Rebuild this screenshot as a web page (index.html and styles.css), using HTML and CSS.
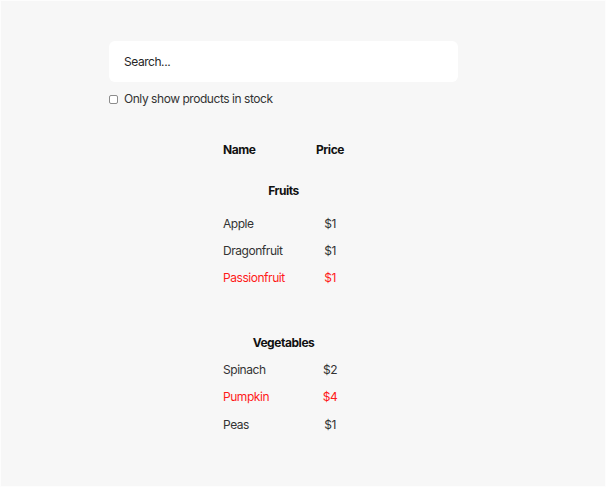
FILE: index.html
```html
<!DOCTYPE html>
<html lang="en">
<head>
<meta charset="utf-8">
<title>Products</title>
<link rel="stylesheet" href="styles.css">
</head>
<body>
<div class="app">
  <form class="search-bar">
    <input class="search" type="text" placeholder="Search...">
    <label class="stock">
      <input class="check" type="checkbox">
      <span>Only show products in stock</span>
    </label>
  </form>
  <table class="products">
    <colgroup><col class="col-name"><col class="col-price"></colgroup>
    <thead>
      <tr><th class="h-name">Name</th><th class="h-price">Price</th></tr>
    </thead>
    <tbody>
      <tr class="category first"><th colspan="2">Fruits</th></tr>
      <tr><td>Apple</td><td class="price">$1</td></tr>
      <tr><td>Dragonfruit</td><td class="price">$1</td></tr>
      <tr class="out"><td>Passionfruit</td><td class="price">$1</td></tr>
      <tr class="category"><th colspan="2">Vegetables</th></tr>
      <tr><td>Spinach</td><td class="price">$2</td></tr>
      <tr class="out"><td>Pumpkin</td><td class="price">$4</td></tr>
      <tr class="last"><td>Peas</td><td class="price">$1</td></tr>
    </tbody>
  </table>
</div>
</body>
</html>
```

FILE: styles.css
```css
html, body {
  margin: 0;
  padding: 0;
}
body {
  background: #f7f7f7;
  font-family: Inter, "Noto Sans", sans-serif;
  font-size: 12px;
  letter-spacing: -0.45px;
  color: #333;
  height: 487px;
  box-sizing: border-box;
  border: 1px solid #fdfdfd;
}
.app {
  width: 349px;
  padding: 40px 0 0 108px;
}
.search-bar {
  display: flex;
  flex-direction: column;
  margin: 0;
}
.search {
  box-sizing: border-box;
  height: 41px;
  width: 100%;
  border: none;
  border-radius: 6px;
  background: #fff;
  padding: 0 15px;
  font-family: inherit;
  font-size: 12px;
  letter-spacing: -0.45px;
  color: #222;
  outline: none;
}
.search::placeholder {
  color: #262626;
}
.stock {
  display: flex;
  align-items: center;
  gap: 6px;
  margin-top: 9px;
  line-height: 16px;
  color: #333;
}
.check {
  appearance: none;
  -webkit-appearance: none;
  box-sizing: border-box;
  width: 9px;
  height: 9px;
  margin: 0;
  border: 1px solid #8c8c8c;
  border-radius: 2px;
  background: #fff;
}
.products {
  margin: 29px auto 0;
  border-collapse: collapse;
  table-layout: fixed;
  width: 121px;
}
.col-name { width: 93px; }
.col-price { width: 28px; }
.products th,
.products td {
  padding: 7px 0;
  line-height: 13px;
  white-space: nowrap;
}
.products th {
  font-weight: 700;
  color: #111;
}
.h-name { text-align: left; }
.h-price { text-align: center; }
.price { text-align: center; }
.category th {
  text-align: center;
  padding: 45px 0 7px;
}
.category.first th {
  padding: 21px 0 13px;
}
.last td {
  padding-top: 8px;
}
.out td {
  color: #ff1a1a;
}
```
